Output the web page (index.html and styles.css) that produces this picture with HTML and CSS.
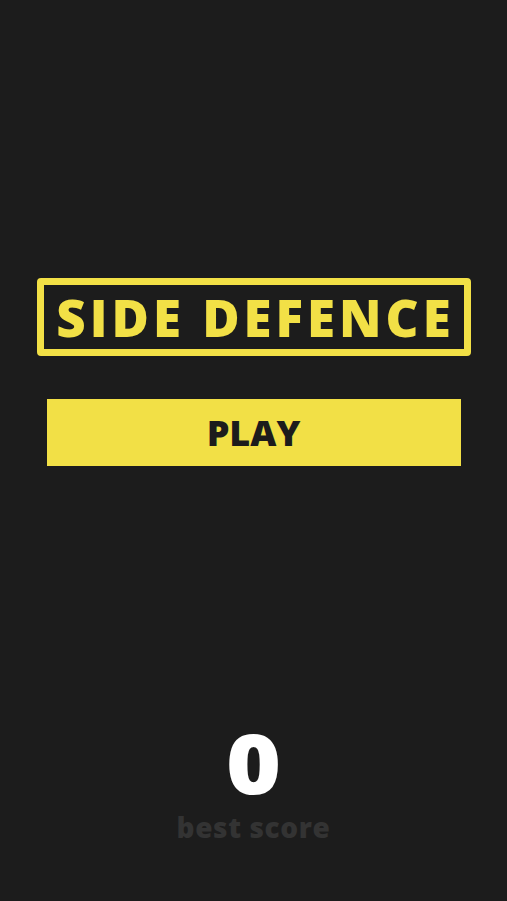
FILE: index.html
```html
<!DOCTYPE html>
<html>
<head>
<meta charset="utf-8">
<link rel="stylesheet" href="styles.css">
</head>
<body>
<div class="screen">
  <div class="title"><span class="title-text">SIDE DEFENCE</span></div>
  <div class="play">PLAY</div>
  <div class="score-block">
    <div class="score">0</div>
    <div class="best">best score</div>
  </div>
</div>
</body>
</html>
```
FILE: styles.css
```css
html, body {
  margin: 0;
  padding: 0;
  background: #1c1c1c;
}
.screen {
  height: 901px;
  display: flex;
  flex-direction: column;
  align-items: center;
  font-family: "Open Sans", "DejaVu Sans", sans-serif;
  font-weight: 800;
}
.title {
  margin-top: 278px;
  width: 420px;
  height: 64px;
  border: 7px solid #f2e046;
  border-radius: 4px;
  display: flex;
  align-items: center;
  justify-content: center;
  color: #f2e046;
  font-size: 51px;
  letter-spacing: 4px;
}
.title-text {
  line-height: 1;
  margin-right: -4px;
}
.play {
  margin-top: 43px;
  width: 414px;
  height: 67px;
  background: #f2e046;
  color: #1c1c1c;
  display: flex;
  align-items: center;
  justify-content: center;
  font-size: 36px;
}
.score-block {
  margin-top: auto;
  margin-bottom: 59px;
  display: flex;
  flex-direction: column;
  align-items: center;
}
.score {
  color: #ffffff;
  font-size: 84px;
  line-height: 84px;
  transform: scaleX(1.12);
}
.best {
  margin-top: 8px;
  color: #333333;
  font-size: 28px;
  line-height: 30px;
  letter-spacing: 0.6px;
}
```
